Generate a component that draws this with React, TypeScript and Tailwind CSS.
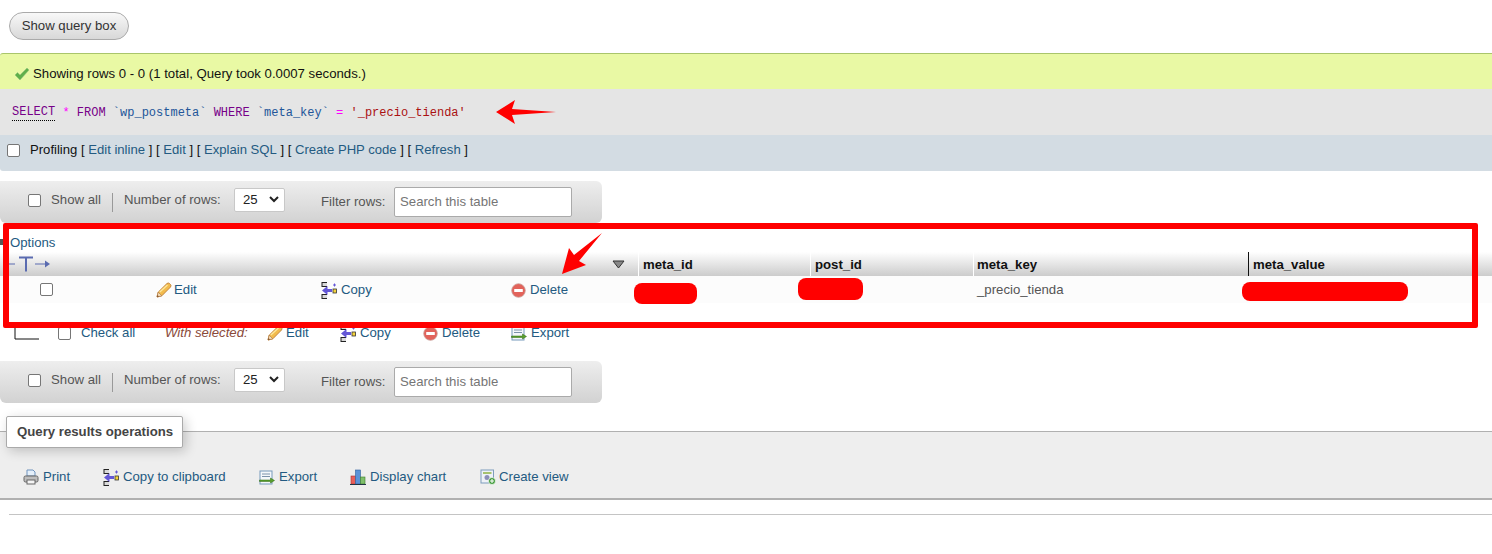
const SQL_PURPLE = "text-[#770088]";

function Pencil() {
  return (
    <svg width="16" height="16" viewBox="0 0 16 16" className="shrink-0">
      <path d="M1 15l1.200-4.800L11 1.500q1.300-1 2.500 0l1 1q1 1.200 0 2.500L5.800 13.800z" fill="#f2bb4d" stroke="#c4843a" strokeWidth="1" />
      <path d="M1 15l1.200-4.800 3.600 3.600z" fill="#f6dfbc" stroke="#a8703a" strokeWidth=".6" />
      <path d="M1 15l.5-2 1.500 1.500z" fill="#7a4a20" />
      <path d="M3.800 10L11.500 3" stroke="#fde79c" strokeWidth="1.400" />
    </svg>
  );
}

function CopyIcon() {
  return (
    <svg width="16" height="17" viewBox="0 0 16 17" className="shrink-0">
      <rect x="1" y="0" width="5" height="4" fill="#d9d9d9" />
      <rect x="1" y="13" width="5" height="4" fill="#d9d9d9" />
      <path d="M1 .5h5M1 4.500h5M1 12.500h5M1 16.500h5M1 0v5M1 12v5" stroke="#222" strokeWidth="1" />
      <path d="M1 8.500l5.500-4.500v3H11v3H6.500v3z" fill="#6457d6" />
      <rect x="12" y="7" width="3.500" height="4" fill="#f5d33c" stroke="#333" strokeWidth=".8" />
      <path d="M13.500 1.500v3M12 3h3" stroke="#6457d6" strokeWidth="1" />
    </svg>
  );
}

function DeleteIcon() {
  return (
    <svg width="15" height="15" viewBox="0 0 15 15" className="shrink-0">
      <circle cx="7.500" cy="7.500" r="6.800" fill="#e2635b" stroke="#c9a09a" strokeWidth=".8" />
      <rect x="3.200" y="6" width="8.600" height="3" rx=".5" fill="#fff" />
    </svg>
  );
}

function ExportIcon() {
  return (
    <svg width="16" height="15" viewBox="0 0 16 15" className="shrink-0">
      <rect x="1" y="1" width="12" height="13" fill="#f4f7fb" stroke="#7799bb" />
      <path d="M3 4h8M3 6.500h8" stroke="#7b92aa" strokeWidth="1" />
      <path d="M0.500 10h11V8l4 2.500-4 2.500v-1.500H.500z" fill="#5aa02c" stroke="#2f6b12" strokeWidth=".5" />
    </svg>
  );
}

function PrintIcon() {
  return (
    <svg width="16" height="16" viewBox="0 0 16 16" className="shrink-0">
      <path d="M4 7V1h6l2 2v4z" fill="#e4effa" stroke="#6f93bd" />
      <rect x="1" y="7" width="14" height="6" rx="1.500" fill="#bdbdbd" stroke="#666" />
      <rect x="4" y="11" width="8" height="4" fill="#f4f4f4" stroke="#666" />
    </svg>
  );
}

function ChartIcon() {
  return (
    <svg width="16" height="16" viewBox="0 0 16 16" className="shrink-0">
      <rect x="1" y="7" width="4.500" height="8" fill="#e9605a" stroke="#a33" strokeWidth=".6" />
      <rect x="5.500" y="1" width="5" height="14" fill="#5c93d8" stroke="#2d5f9e" strokeWidth=".6" />
      <rect x="10.500" y="8" width="4.500" height="7" fill="#7fbf6a" stroke="#3f7d2c" strokeWidth=".6" />
      <path d="M0 15.500h16" stroke="#234" strokeWidth="1" />
    </svg>
  );
}

function ViewIcon() {
  return (
    <svg width="16" height="16" viewBox="0 0 16 16" className="shrink-0">
      <rect x="1" y="1" width="12.500" height="13" fill="#eef2f7" stroke="#7d9cbc" />
      <rect x="3" y="3" width="8.500" height="2" fill="#a5c26f" />
      <circle cx="7" cy="8.500" r="2.500" fill="#8b90b8" />
      <circle cx="12" cy="12" r="3.500" fill="#3f9a3a" stroke="#fff" strokeWidth=".7" />
      <path d="M10 12h4M12 10v4" stroke="#fff" strokeWidth="1.100" />
    </svg>
  );
}

function Checkmark() {
  return (
    <svg width="16" height="14" viewBox="0 0 16 14" className="shrink-0">
      <path d="M1 8l2.500-2.500 2.500 2.500L13 1l2 2-9 10z" fill="#5fb04a" stroke="#8fbf80" strokeWidth=".5" />
    </svg>
  );
}

function Box({ className = "" }: { className?: string }) {
  return <span className={`block w-[13px] h-[13px] shrink-0 rounded-[2px] border border-[#767676] bg-white ${className}`} />;
}

function NavBar() {
  return (
    <div className="flex items-center w-[602px] h-[42px] rounded-r-[6px] rounded-bl-[6px] bg-gradient-to-b from-[#eeeeee] to-[#d2d2d2] text-[#555555]">
      <Box className="ml-[28px] mb-[4px]" />
      <span className="ml-[10px] mb-[5px] w-[61px]">Show all</span>
      <span className="w-px h-[19px] bg-[#999999] mt-[1px]" />
      <span className="ml-[11px] mb-[5px] w-[110px]">Number of rows:</span>
      <span className="mb-[5px] flex items-center justify-between w-[51px] h-[24px] pl-[8px] pr-[5px] rounded-[2px] border border-[#c8c8c8] bg-white text-[#222222]">
        25
        <svg width="10" height="7" viewBox="0 0 10 7">
          <path d="M1 1l4 4 4-4" fill="none" stroke="#222" strokeWidth="2" />
        </svg>
      </span>
      <span className="ml-[36px] w-[73px]">Filter rows:</span>
      <span className="flex items-center w-[178px] h-[30px] pl-[5px] rounded-[2px] border border-[#aaaaaa] bg-white text-[#757575]">
        Search this table
      </span>
    </div>
  );
}

function Action({ icon, label, className = "" }: { icon: React.ReactNode; label: string; className?: string }) {
  return (
    <span className={`flex items-center shrink-0 text-[#235a81] ${className}`}>
      {icon}
      {label}
    </span>
  );
}

export default function App() {
  return (
    <div className="relative w-[1492px] h-[554px] overflow-hidden bg-white font-['Liberation_Sans',Arial,sans-serif] text-[13.2px] leading-[18px] text-[#333333]">
      {/* query box toggle */}
      <div className="pt-[12px] pl-[9px]">
        <div className="flex items-center justify-center w-[120px] h-[28px] pb-[1px] rounded-full border border-[#aaaaaa] bg-gradient-to-b from-[#f8f8f8] to-[#d8d8d8] text-[#333333]">
          Show query box
        </div>
      </div>

      {/* result message */}
      <div className="mt-[13px] flex items-center h-[36px] pl-[14px] pt-[4px] gap-[3px] border-t border-[#a9c56b] rounded-tl-[3px] bg-[#e9f9a4] text-[#111111]">
        <Checkmark />
        Showing rows 0 - 0 (1 total, Query took 0.0007 seconds.)
      </div>
      <div className="flex items-center h-[46px] pl-[12px] pt-[1px] bg-[#e5e5e5] font-['Liberation_Mono',monospace] text-[12px]">
        <span className={`${SQL_PURPLE} border-b border-dotted border-black leading-[15px]`}>SELECT</span>
        <span className="text-[#ff00ff]">&nbsp;*&nbsp;</span>
        <span className={SQL_PURPLE}>FROM&nbsp;</span>
        <span className="text-[#225599]">`wp_postmeta`&nbsp;</span>
        <span className={SQL_PURPLE}>WHERE&nbsp;</span>
        <span className="text-[#225599]">`meta_key`&nbsp;</span>
        <span className="text-[#ff00ff]">=&nbsp;</span>
        <span className="text-[#aa1111]">'_precio_tienda'</span>
      </div>
      <div className="flex items-start h-[36px] pl-[7px] pt-[6px] rounded-bl-[3px] bg-[#d3dce3] text-[13.1px] text-[#111111]">
        <Box className="mr-[10px] mt-[3px]" />
        Profiling&nbsp;[&nbsp;<span className="text-[#235a81]">Edit inline</span>&nbsp;]&nbsp;[&nbsp;
        <span className="text-[#235a81]">Edit</span>&nbsp;]&nbsp;[&nbsp;
        <span className="text-[#235a81]">Explain SQL</span>&nbsp;]&nbsp;[&nbsp;
        <span className="text-[#235a81]">Create PHP code</span>&nbsp;]&nbsp;[&nbsp;
        <span className="text-[#235a81]">Refresh</span>&nbsp;]
      </div>

      <div className="mt-[10px]">
        <NavBar />
      </div>

      {/* results table */}
      <div className="h-[29px] pt-[11px] pl-[10px] text-[#235a81]">Options</div>
      <div className="flex items-center h-[24px] pt-[2px] bg-gradient-to-b from-[#ffffff] to-[#cccccc] font-bold text-[#111111]">
        <svg width="44" height="18" viewBox="0 0 44 18" className="ml-[7px] -mt-[2px] shrink-0">
          <path d="M0 9h8M28 9h12" stroke="#5a6bb0" strokeWidth="1.200" />
          <path d="M38 5.500l5 3.500-5 3.500z" fill="#5a6bb0" />
          <path d="M12 2.500h14M19 2.500v14" stroke="#5a6bb0" strokeWidth="2" />
        </svg>
        <svg width="13" height="9" viewBox="0 0 13 9" className="ml-[561px] -mt-[2px] shrink-0">
          <path d="M1 1h11L6.500 8z" fill="#888" stroke="#333" strokeWidth="1" />
        </svg>
        <span className="ml-[13px] w-px h-[24px] -mt-[2px] bg-white" />
        <span className="w-[171px] pl-[4px]">meta_id</span>
        <span className="w-px h-[24px] -mt-[2px] bg-white" />
        <span className="w-[162px] pl-[4px]">post_id</span>
        <span className="w-px h-[24px] -mt-[2px] bg-white" />
        <span className="w-[274px] pl-[3px]">meta_key</span>
        <span className="w-px h-[24px] -mt-[2px] bg-[#111111]" />
        <span className="pl-[4px]">meta_value</span>
      </div>
      <div className="flex items-start h-[27px] pt-[5px] bg-[#fcfcfc] text-[#235a81]">
        <Box className="ml-[40px] mt-[2px]" />
        <Action icon={<Pencil />} label="Edit" className="ml-[103px] w-[165px] gap-[2px]" />
        <Action icon={<CopyIcon />} label="Copy" className="w-[190px] gap-[4px]" />
        <Action icon={<DeleteIcon />} label="Delete" className="w-[466px] gap-[4px]" />
        <span className="text-[#555555]">_precio_tienda</span>
      </div>
      <div className="flex items-center h-[58px] pt-[2px] text-[#235a81]">
        <svg width="28" height="16" viewBox="0 0 28 16" className="ml-[12px] shrink-0">
          <path d="M3 1v13h24" fill="none" stroke="#111" strokeWidth="1" />
        </svg>
        <Box className="ml-[18px]" />
        <span className="ml-[10px] w-[84px]">Check all</span>
        <span className="w-[102px] italic text-[#8a4a3a]">With selected:</span>
        <Action icon={<Pencil />} label="Edit" className="w-[73px] gap-[3px]" />
        <Action icon={<CopyIcon />} label="Copy" className="w-[83px] gap-[4px]" />
        <Action icon={<DeleteIcon />} label="Delete" className="w-[88px] gap-[4px]" />
        <Action icon={<ExportIcon />} label="Export" className="gap-[4px]" />
      </div>

      <NavBar />

      {/* query results operations */}
      <div className="relative mt-[28px] h-[69px] border-t border-b-2 border-[#b0b0b0] bg-[#eeeeee]">
        <div className="absolute left-[6px] -top-[16px] flex items-center h-[32px] w-[177px] pl-[10px] rounded-[2px] border border-[#aaaaaa] bg-white font-bold text-[#444444] shadow-[3px_3px_12px_rgba(0,0,0,0.2)]">
          Query results operations
        </div>
        <div className="flex items-center h-full pt-[24px] pl-[23px] text-[#235a81]">
          <Action icon={<PrintIcon />} label="Print" className="w-[80px] gap-[4px]" />
          <Action icon={<CopyIcon />} label="Copy to clipboard" className="w-[156px] gap-[4px]" />
          <Action icon={<ExportIcon />} label="Export" className="w-[91px] gap-[4px]" />
          <Action icon={<ChartIcon />} label="Display chart" className="w-[130px] gap-[4px]" />
          <Action icon={<ViewIcon />} label="Create view" className="gap-[3px]" />
        </div>
      </div>
      <div className="mt-[14px] ml-[9px] h-px bg-[#c4c4c4]" />

      {/* annotations drawn over the screenshot */}
      <div className="absolute left-[3px] top-[223px] w-[1475px] h-[105px] rounded-[2px] border-[6px] border-[#ff0000]" />
      <svg width="62" height="26" viewBox="0 0 62 26" className="absolute left-[495px] top-[99px]">
        <path d="M1 13L20 1l-3 9 44 3-44 3 3 9z" fill="#ff0000" />
      </svg>
      <svg width="44" height="44" viewBox="0 0 44 44" className="absolute left-[560px] top-[232px]">
        <path d="M42 1L19 29l7 4L2 42 9 16l5 7z" fill="#ff0000" />
      </svg>
      <div className="absolute left-[634px] top-[283px] w-[63px] h-[21px] rounded-[8px] bg-[#ff0000]" />
      <div className="absolute left-[798px] top-[278px] w-[65px] h-[22px] rounded-[8px] bg-[#ff0000]" />
      <div className="absolute left-[1242px] top-[282px] w-[166px] h-[19px] rounded-[8px] bg-[#ff0000]" />
      <div className="absolute left-0 top-[239px] w-[3px] h-[6px] bg-[#555555]" />
    </div>
  );
}
